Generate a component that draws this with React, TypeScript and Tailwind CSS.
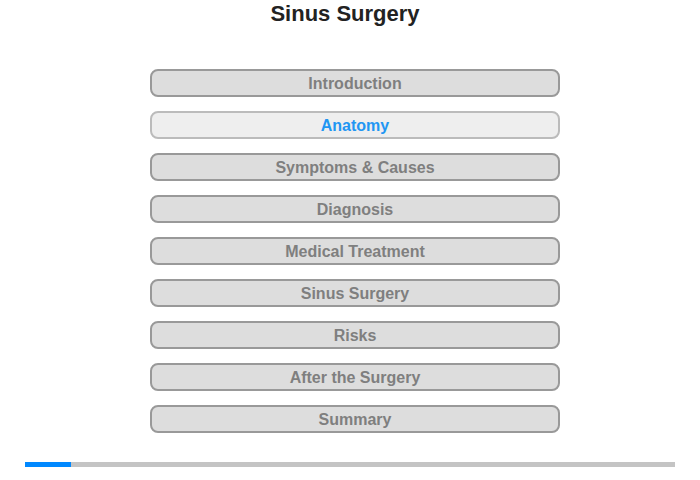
import React from "react";

const items = [
  "Introduction",
  "Anatomy",
  "Symptoms & Causes",
  "Diagnosis",
  "Medical Treatment",
  "Sinus Surgery",
  "Risks",
  "After the Surgery",
  "Summary",
];

export default function App() {
  return (
    <div className="w-[700px] h-[480px] bg-white flex flex-col items-center" style={{ fontFamily: '"Liberation Sans", Arial, sans-serif' }}>
      <h1 className="mt-[1px] h-[26px] pr-[10px] text-[22px] leading-[26px] font-bold text-[#222]">Sinus Surgery</h1>
      <div className="mt-[42px] ml-[10px] flex flex-col gap-[14px]">
        {items.map((t, i) => (
          <div
            key={t}
            className={
              i === 1
                ? "w-[410px] h-[28px] pt-[1px] rounded-[8px] border-2 border-[#bbbbbb] bg-[#eeeeee] flex items-center justify-center text-[16px] font-bold text-[#2196f3]"
                : "w-[410px] h-[28px] pt-[1px] rounded-[8px] border-2 border-[#999999] bg-[#dddddd] flex items-center justify-center text-[16px] font-bold text-[#7f7f7f]"
            }
          >
            {t}
          </div>
        ))}
      </div>
      <div className="mt-[29px] w-[650px] h-[5px] bg-[#c4c4c4] flex">
        <div className="w-[46px] h-full bg-[#0088ff]" />
      </div>
    </div>
  );
}
